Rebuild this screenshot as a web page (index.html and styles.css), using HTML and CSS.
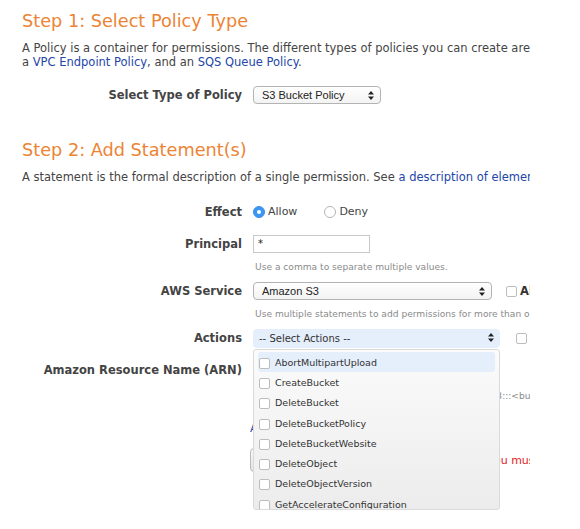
FILE: index.html
```html
<!DOCTYPE html>
<html>
<head>
<meta charset="utf-8">
<link rel="stylesheet" href="styles.css">
</head>
<body>
<div class="page">
  <h2 class="step">Step 1: Select Policy Type</h2>
  <p class="desc">A Policy is a container for permissions. The different types of policies you can create are an IAM Policy, an S3 Bucket Policy, an SNS Topic Policy,<br>a <a href="#">VPC Endpoint Policy</a>, and an <a href="#">SQS Queue Policy</a>.</p>

  <div class="row type-row">
    <div class="label">Select Type of Policy</div>
    <div class="field">
      <div class="select select-type"><span>S3 Bucket Policy</span><svg class="arrows" width="6" height="9" viewBox="0 0 6 9"><path d="M0 3.5L3 0L6 3.5Z M0 5.5L3 9L6 5.5Z" fill="#222"/></svg></div>
    </div>
  </div>

  <h2 class="step step2">Step 2: Add Statement(s)</h2>
  <p class="desc">A statement is the formal description of a single permission. See <a href="#">a description of elements that you can use in statements.</a></p>

  <div class="form">
    <div class="row effect-row">
      <div class="label">Effect</div>
      <div class="field radios">
        <label class="radio-opt"><span class="radio on"></span>Allow</label>
        <label class="radio-opt deny"><span class="radio"></span>Deny</label>
      </div>
    </div>

    <div class="row principal-row">
      <div class="label">Principal</div>
      <div class="field">
        <div class="input">*</div>
        <div class="hint">Use a comma to separate multiple values.</div>
      </div>
    </div>

    <div class="row service-row">
      <div class="label">AWS Service</div>
      <div class="field">
        <div class="inline">
          <div class="select select-service"><span>Amazon S3</span><svg class="arrows" width="6" height="9" viewBox="0 0 6 9"><path d="M0 3.5L3 0L6 3.5Z M0 5.5L3 9L6 5.5Z" fill="#222"/></svg></div>
          <span class="check"></span><span class="check-label">All Services ('*')</span>
        </div>
        <div class="hint">Use multiple statements to add permissions for more than one service.</div>
      </div>
    </div>

    <div class="row actions-row">
      <div class="label">Actions</div>
      <div class="field">
        <div class="inline">
          <div class="select select-actions"><span>-- Select Actions --</span><svg class="arrows" width="6" height="9" viewBox="0 0 6 9"><path d="M0 3.5L3 0L6 3.5Z M0 5.5L3 9L6 5.5Z" fill="#222"/></svg></div>
          <span class="check check-actions"></span><span class="check-label">All Actions ('*')</span>
        </div>
        <div class="dropdown">
          <div class="opt hl"><span class="box"></span>AbortMultipartUpload</div>
          <div class="opt"><span class="box"></span>CreateBucket</div>
          <div class="opt"><span class="box"></span>DeleteBucket</div>
          <div class="opt"><span class="box"></span>DeleteBucketPolicy</div>
          <div class="opt"><span class="box"></span>DeleteBucketWebsite</div>
          <div class="opt"><span class="box"></span>DeleteObject</div>
          <div class="opt"><span class="box"></span>DeleteObjectVersion</div>
          <div class="opt"><span class="box"></span>GetAccelerateConfiguration</div>
        </div>
      </div>
    </div>

    <div class="row arn-row">
      <div class="label">Amazon Resource Name (ARN)</div>
      <div class="field">
        <div class="input arn-input"></div>
        <div class="hint arn-hint">ARN should follow the following format: arn:aws:s3:::&lt;bucket_name&gt;/&lt;key_name&gt;.</div>
      </div>
    </div>

    <div class="row cond-row">
      <div class="label"></div>
      <div class="field"><a href="#" class="cond">Add Conditions (Optional)</a></div>
    </div>

    <div class="row btn-row">
      <div class="label"></div>
      <div class="field inline">
        <div class="button">Add Statement</div>
        <span class="err">You must add at least one statement.</span>
      </div>
    </div>
  </div>
</div>
</body>
</html>
```

FILE: styles.css
```css
html, body {
  margin: 0;
  padding: 0;
  background: #fff;
}
body {
  font-family: "DejaVu Sans", Verdana, sans-serif;
  color: #444;
}
.page {
  width: 530px;
  height: 529px;
  overflow: hidden;
  padding-left: 22px;
  box-sizing: border-box;
}
a {
  color: #2346a8;
  text-decoration: none;
}
.step {
  margin: 0;
  padding-top: 9px;
  font-weight: normal;
  font-size: 17.7px;
  line-height: 24px;
  color: #ec8434;
  white-space: nowrap;
}
.step2 {
  padding-top: 0;
  margin-top: 34px;
}
.desc {
  margin: 8px 0 0;
  font-size: 11.5px;
  line-height: 14px;
  white-space: nowrap;
}
.row {
  display: flex;
  align-items: flex-start;
}
.label {
  width: 220px;
  flex: none;
  text-align: right;
  font-weight: bold;
  font-size: 11.5px;
  color: #444;
  padding-right: 11px;
  white-space: nowrap;
}
.field {
  flex: none;
  width: 300px;
  position: relative;
}
.type-row {
  margin-top: 17px;
  align-items: center;
}
.select {
  flex: none;
  position: relative;
  box-sizing: border-box;
  height: 18px;
  border: 1px solid #b3b3b3;
  border-radius: 4px;
  background: linear-gradient(#fff, #f3f3f3);
  font-family: "Liberation Sans", Arial, sans-serif;
  font-size: 11px;
  color: #222;
  padding-left: 8px;
  line-height: 16px;
}
.select .arrows {
  position: absolute;
  right: 6px;
  top: 3.5px;
}
.select-type {
  width: 128px;
}
.form {
  margin-top: 21px;
}
.effect-row .label { line-height: 14px; }
.radios {
  display: flex;
  align-items: center;
  font-size: 11px;
  line-height: 14px;
}
.radio-opt {
  display: flex;
  align-items: center;
}
.radio-opt.deny {
  margin-left: 27px;
}
.radio {
  width: 12px;
  height: 12px;
  box-sizing: border-box;
  border-radius: 50%;
  border: 1px solid #b5b5b5;
  background: #fff;
  margin-right: 3px;
  position: relative;
}
.radio.on {
  background: #3b97f5;
  border-color: #3b8de6;
}
.radio.on::after {
  content: "";
  position: absolute;
  width: 4px;
  height: 4px;
  border-radius: 50%;
  background: #fff;
  left: 3px;
  top: 3px;
}
.principal-row {
  margin-top: 16px;
}
.principal-row .label,
.service-row .label,
.actions-row .label,
.arn-row .label {
  line-height: 18px;
}
.input {
  box-sizing: border-box;
  width: 117px;
  height: 18px;
  border: 1px solid #c8c8c8;
  background: #fff;
  font-size: 10px;
  line-height: 16px;
  padding-left: 4px;
  color: #222;
}
.hint {
  font-size: 9.1px;
  color: #8a8a8a;
  margin-top: 8px;
  padding-left: 2px;
  line-height: 12px;
  white-space: nowrap;
}
.service-row {
  margin-top: 9px;
}
.inline {
  display: flex;
  align-items: center;
  white-space: nowrap;
}
.select-service {
  width: 239px;
}
.check {
  flex: none;
  width: 11px;
  height: 11px;
  box-sizing: border-box;
  border: 1px solid #bdbdbd;
  border-radius: 2px;
  background: #fff;
  margin-left: 14px;
  margin-right: 3px;
}
.check-label {
  font-size: 11.5px;
  font-weight: bold;
  color: #333;
}
.service-row .hint { margin-top: 8px; }
.actions-row {
  margin-top: 9px;
}
.select-actions {
  width: 247px;
  height: 19px;
  border: none;
  background: #e5eefb;
  font-family: "DejaVu Sans", Verdana, sans-serif;
  font-size: 10px;
  line-height: 19px;
  padding-left: 6px;
  color: #333;
}
.check-actions {
  margin-left: 16px;
}
.dropdown {
  position: absolute;
  left: 0;
  top: 20px;
  width: 247px;
  height: 161px;
  box-sizing: border-box;
  border: 1px solid #dadada;
  border-radius: 3px;
  background: linear-gradient(#fbfbfb, #ececec);
  padding: 2px 4px 0;
  overflow: hidden;
  z-index: 5;
}
.opt {
  display: flex;
  align-items: center;
  height: 20.3px;
  font-size: 9.5px;
  color: #333;
  white-space: nowrap;
  border-radius: 3px;
}
.opt.hl {
  background: #e5eefb;
}
.opt .box {
  flex: none;
  width: 11px;
  height: 11px;
  box-sizing: border-box;
  border: 1px solid #bdbdbd;
  border-radius: 2px;
  background: #fff;
  margin: 2px 5px 0 1px;
}
.arn-row {
  margin-top: 13px;
}
.arn-input {
  width: 240px;
}
.arn-row .hint {
  margin-top: 11px;
  text-indent: 15px;
}
.cond-row {
  margin-top: 20px;
  font-size: 11px;
}
.cond {
  font-size: 11px;
  margin-left: -3px;
}
.btn-row {
  margin-top: 13px;
}
.button {
  flex: none;
  box-sizing: border-box;
  height: 24px;
  border: 1px solid #bbb;
  border-radius: 4px;
  background: linear-gradient(#fafafa, #e2e2e2);
  font-size: 11px;
  line-height: 22px;
  padding: 0 12px;
  color: #333;
  margin-left: -3px;
}
.err {
  flex: none;
  color: #e21a1a;
  font-size: 11px;
  margin-left: 130px;
}
```
